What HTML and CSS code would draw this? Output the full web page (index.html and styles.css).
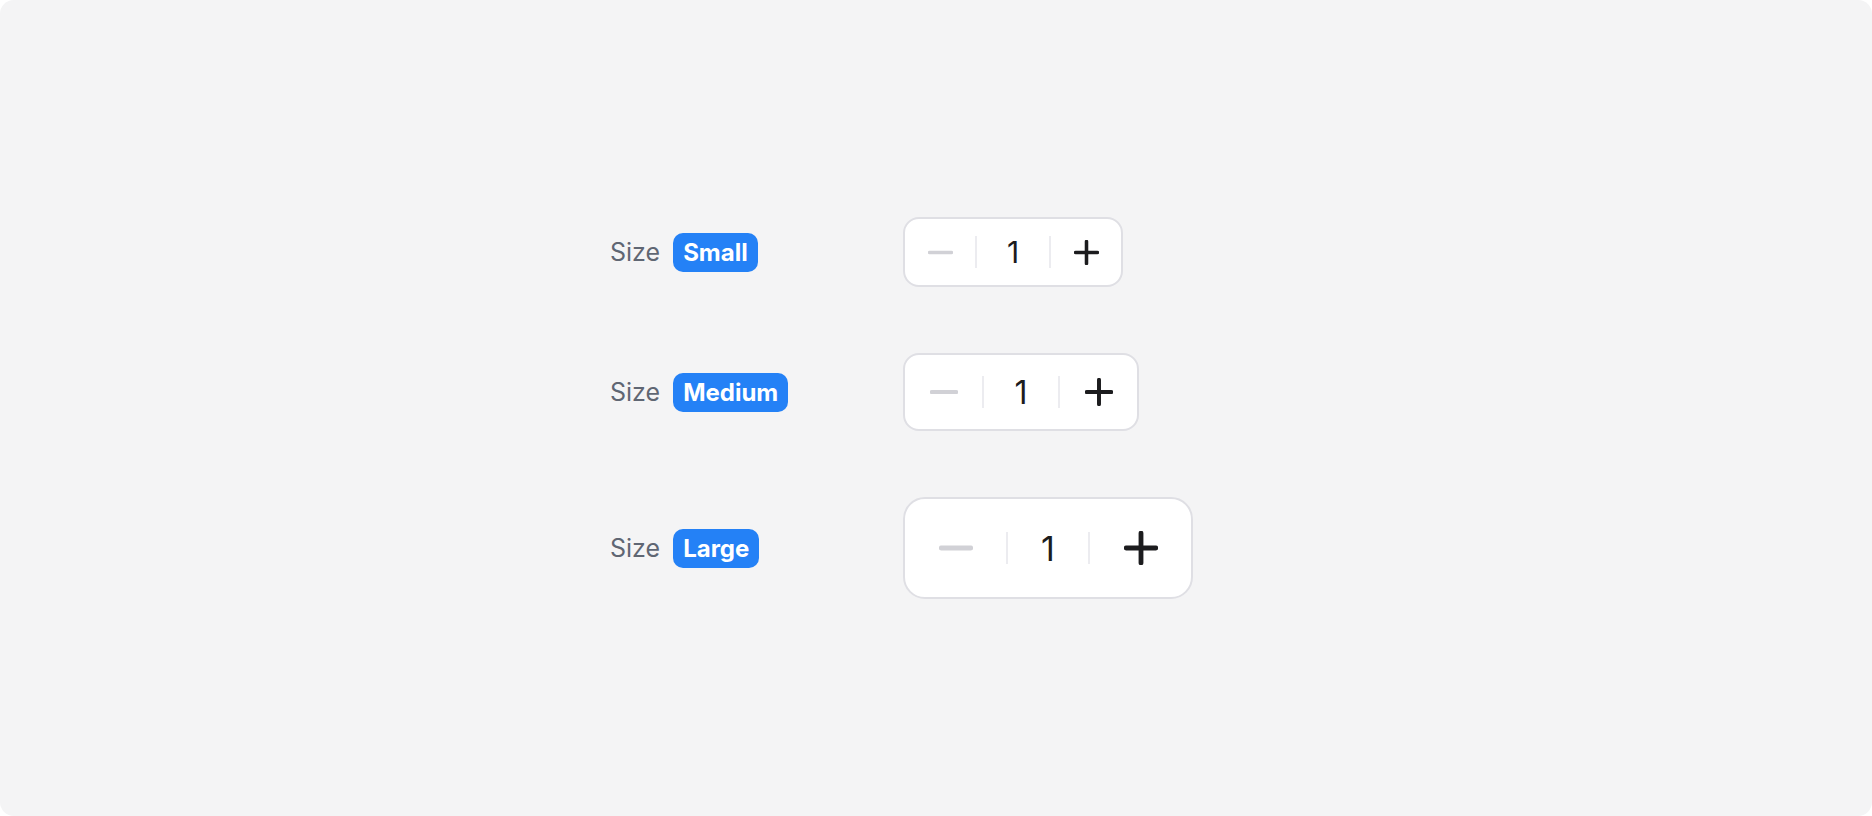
FILE: index.html
```html
<!DOCTYPE html>
<html lang="en">
<head>
  <meta charset="UTF-8">
  <meta name="viewport" content="width=device-width, initial-scale=1.0">
  <title>Stepper sizes</title>
  <link rel="stylesheet" href="styles.css">
</head>
<body>

  <div class="panel">
    <div class="demo">

      <!-- small -->
      <div class="label">Size <span class="badge">Small</span></div>
      <div class="stepper stepper-sm">
        <button class="step" disabled aria-label="Decrease">
          <svg viewBox="0 0 24 24"><path d="M1.5 12h21"/></svg>
        </button>
        <span class="divider"></span>
        <span class="value">1</span>
        <span class="divider"></span>
        <button class="step" aria-label="Increase">
          <svg viewBox="0 0 24 24"><path d="M12 1.5v21M1.5 12h21"/></svg>
        </button>
      </div>

      <!-- medium -->
      <div class="label">Size <span class="badge">Medium</span></div>
      <div class="stepper stepper-md">
        <button class="step" disabled aria-label="Decrease">
          <svg viewBox="0 0 24 24"><path d="M1.5 12h21"/></svg>
        </button>
        <span class="divider"></span>
        <span class="value">1</span>
        <span class="divider"></span>
        <button class="step" aria-label="Increase">
          <svg viewBox="0 0 24 24"><path d="M12 1.5v21M1.5 12h21"/></svg>
        </button>
      </div>

      <!-- large -->
      <div class="label">Size <span class="badge">Large</span></div>
      <div class="stepper stepper-lg">
        <button class="step" disabled aria-label="Decrease">
          <svg viewBox="0 0 24 24"><path d="M1.5 12h21"/></svg>
        </button>
        <span class="divider"></span>
        <span class="value">1</span>
        <span class="divider"></span>
        <button class="step" aria-label="Increase">
          <svg viewBox="0 0 24 24"><path d="M12 1.5v21M1.5 12h21"/></svg>
        </button>
      </div>

    </div>
  </div>

</body>
</html>
```

FILE: styles.css
```css
* {
  box-sizing: border-box;
}
html, body {
  margin: 0;
  height: 100%;
  background: #fff;
}
body {
  font-family: Inter, "Noto Sans", sans-serif;
}

.panel {
  height: 100vh;
  background-color: #f4f4f5;
  border-radius: 14px;
  display: flex;
  align-items: center;
  justify-content: center;
}

.demo {
  display: grid;
  grid-template-columns: 293px 359px;
  row-gap: 66px;
  align-items: center;
}

/* "Size" label + blue tag */
.label {
  display: flex;
  align-items: center;
  gap: 13px;
  font-size: 25px;
  color: #5f6673;
}
.badge {
  background-color: #2481f6;
  color: #fff;
  font-size: 24px;
  font-weight: 700;
  height: 39px;
  line-height: 39px;
  padding: 0 10px;
  border-radius: 10px;
}

/* stepper */
.stepper {
  justify-self: start;
  display: flex;
  align-items: center;
  background: #fff;
  border: 2px solid #dfdfe4;
  border-radius: 16px;
}
.step {
  height: 100%;
  border: 0;
  padding: 0;
  background: none;
  display: flex;
  align-items: center;
  justify-content: center;
  color: #1c1c1e;
  cursor: pointer;
}
.step:disabled {
  color: #d1d1d6;
  cursor: default;
}
.step svg {
  fill: none;
  stroke: currentColor;
  stroke-width: 3.4;
  stroke-linecap: round;
}
.divider {
  width: 2px;
  height: 32px;
  background-color: #ececf0;
}
.value {
  text-align: center;
  color: #1c1c1e;
}

.stepper-sm { height: 70px; }
.stepper-sm .step { width: 70px; }
.stepper-sm .step svg { width: 25px; height: 25px; }
.stepper-sm .value { width: 72px; font-size: 30px; }

.stepper-md { height: 78px; }
.stepper-md .step { width: 77px; }
.stepper-md .step svg { width: 28px; height: 28px; }
.stepper-md .value { width: 74px; font-size: 32px; }

.stepper-lg { height: 102px; border-radius: 22px; }
.stepper-lg .step { width: 101px; }
.stepper-lg .step svg { width: 34px; height: 34px; }
.stepper-lg .value { width: 80px; font-size: 34px; }
```
